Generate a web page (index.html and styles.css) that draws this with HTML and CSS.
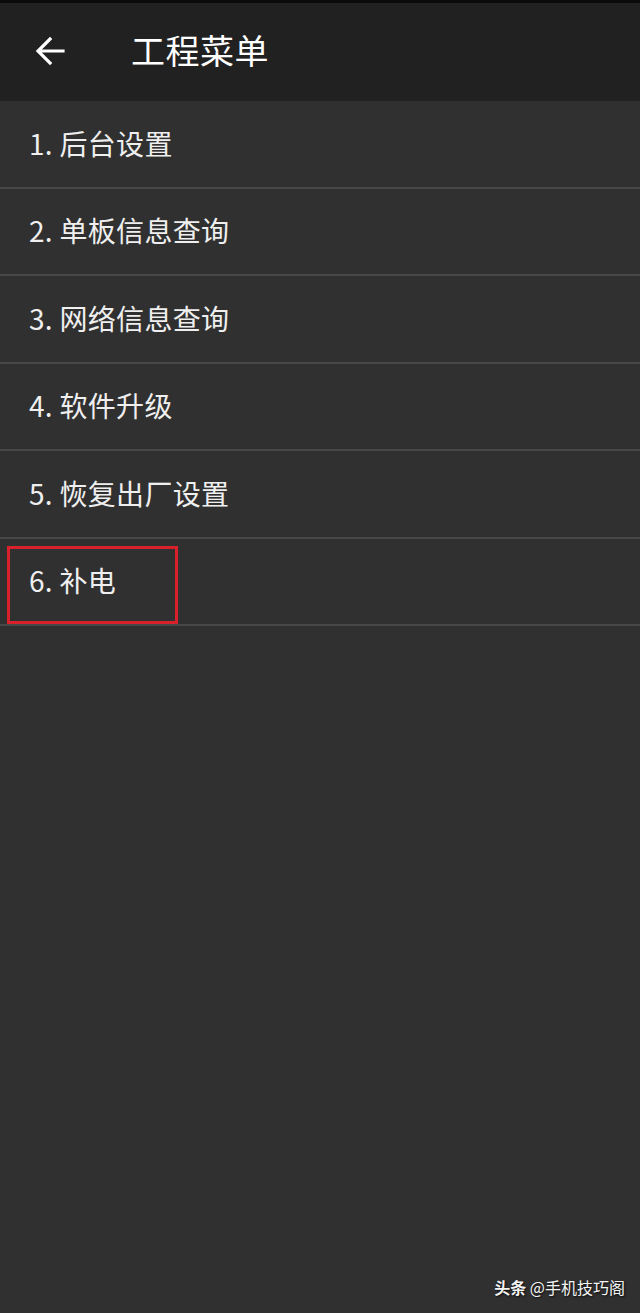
FILE: index.html
```html
<!DOCTYPE html>
<html lang="zh">
<head>
<meta charset="utf-8">
<link rel="stylesheet" href="styles.css">
</head>
<body>
<div class="screen">
  <div class="topstrip"></div>
  <header class="appbar">
    <svg class="back" width="30" height="30" viewBox="0 0 30 30">
      <path d="M28 15 H4 M15 3 L3 15 L15 27" fill="none" stroke="#fff" stroke-width="3.2" stroke-linecap="square"/>
    </svg>
    <h1 class="title">工程菜单</h1>
  </header>
  <ul class="menu">
    <li class="item">1. 后台设置</li>
    <li class="item">2. 单板信息查询</li>
    <li class="item">3. 网络信息查询</li>
    <li class="item">4. 软件升级</li>
    <li class="item">5. 恢复出厂设置</li>
    <li class="item marked">6. 补电<span class="highlight"></span></li>
  </ul>
  <div class="watermark"><b>头条</b> @手机技巧阁</div>
</div>
</body>
</html>
```
FILE: styles.css
```css
html, body {
  margin: 0;
  padding: 0;
  background: #303030;
}
.screen {
  position: relative;
  width: 640px;
  height: 1313px;
  background: #303030;
  font-family: "Noto Sans CJK SC", "Noto Sans", sans-serif;
  color: #f0f0f0;
  overflow: hidden;
}
.topstrip {
  height: 3px;
  background: #0b0b0b;
}
.appbar {
  height: 98px;
  background: #212121;
  display: flex;
  align-items: center;
  padding-left: 35px;
  box-sizing: border-box;
}
.back {
  display: block;
  margin-top: -2px;
}
.title {
  margin: -4px 0 0 66px;
  font-size: 34px;
  font-weight: 400;
  letter-spacing: 0.5px;
  color: #ffffff;
  line-height: 1;
}
.menu {
  list-style: none;
  margin: 0;
  padding: 0;
}
.item {
  position: relative;
  height: 87.5px;
  box-sizing: border-box;
  border-bottom: 2px solid #484848;
  display: flex;
  align-items: center;
  padding-left: 29px;
  padding-bottom: 2px;
  font-size: 28px;
  letter-spacing: 0.3px;
  color: #efefef;
}
.highlight {
  position: absolute;
  left: 7px;
  top: 7px;
  width: 171px;
  height: 78px;
  box-sizing: border-box;
  border: 3px solid #d8212b;
}
.watermark {
  position: absolute;
  right: 15px;
  bottom: 14px;
  font-size: 16px;
  color: #f4f4f4;
  text-shadow: 1px 1px 2px rgba(0,0,0,0.8);
}
.watermark b {
  font-weight: 700;
}
```
